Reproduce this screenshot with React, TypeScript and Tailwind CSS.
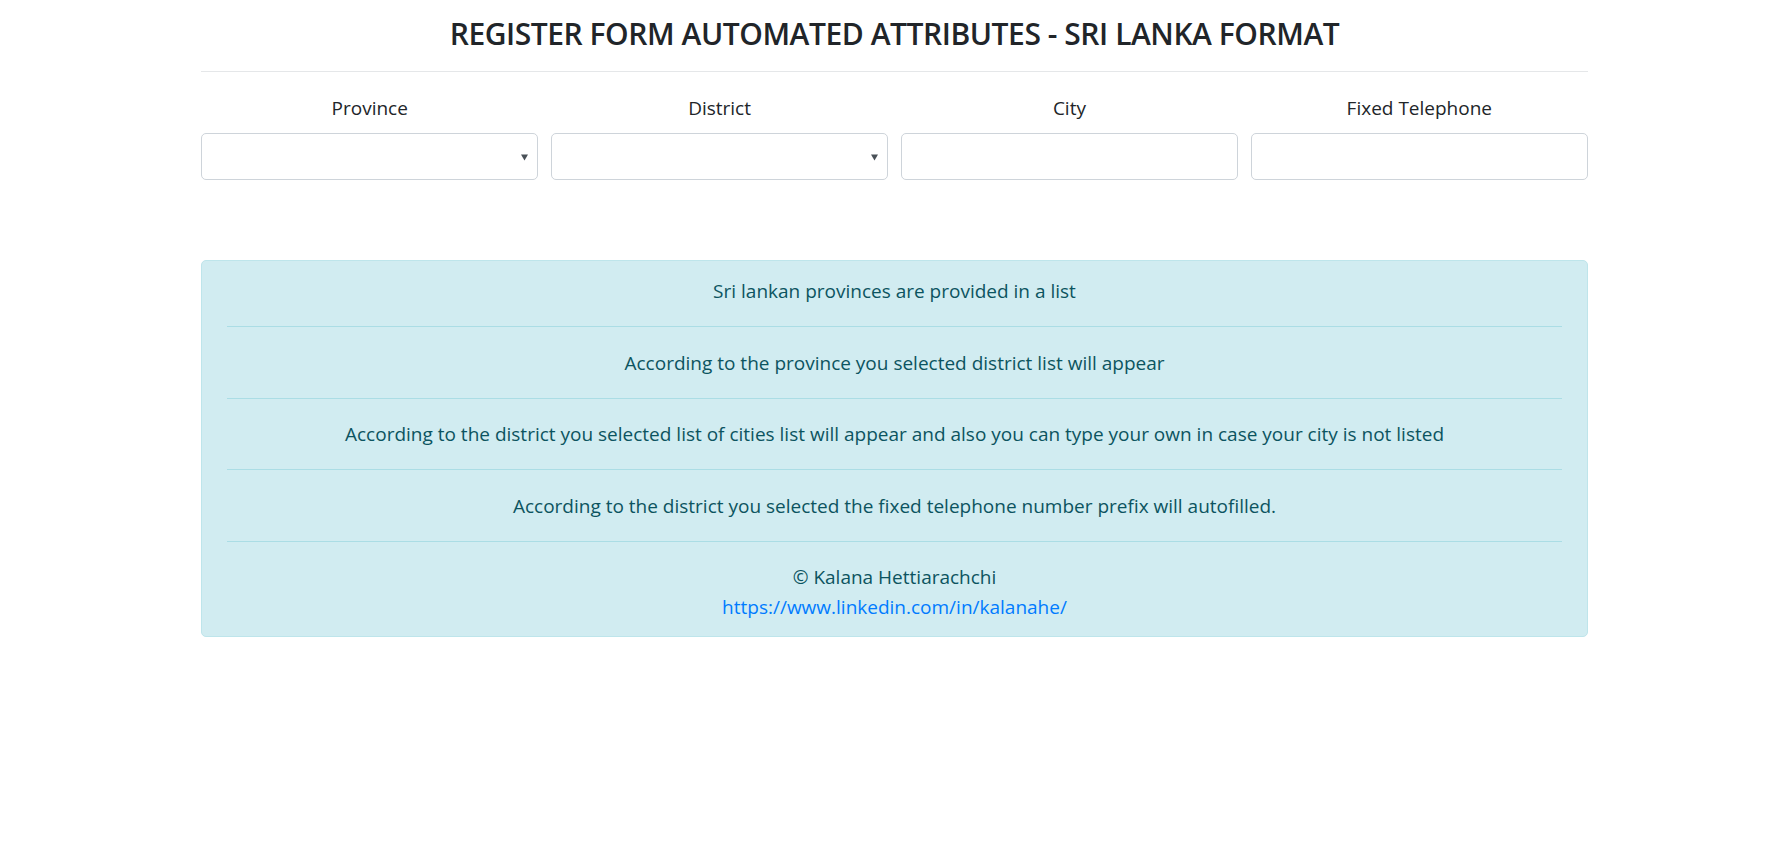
import React, { useState } from 'react';

const FONT = "font-['Open_Sans','Noto_Sans',sans-serif]";

const SelectBox: React.FC = () => (
  <div className="relative h-[47px] rounded-[5px] border border-[#ced4da] bg-white">
    {/* native-looking dropdown arrow */}
    <svg
      className="absolute right-[9px] top-[20px]"
      width="7"
      height="7"
      viewBox="0 0 7 7"
    >
      <path d="M0 0.5 H7 L3.5 6.5 Z" fill="#495057" />
    </svg>
  </div>
);

const TextBox: React.FC<{ value: string; onChange: (v: string) => void }> = ({
  value,
  onChange
}) => (
  <input
    type="text"
    value={value}
    onChange={e => onChange(e.target.value)}
    className="block h-[47px] w-full rounded-[5px] border border-[#ced4da] bg-white px-4 text-[19px] text-[#495057] outline-none"
  />
);

const notes = [
  'Sri lankan provinces are provided in a list',
  'According to the province you selected district list will appear',
  'According to the district you selected list of cities list will appear and also you can type your own in case your city is not listed',
  'According to the district you selected the fixed telephone number prefix will autofilled.'
];

export default function App() {
  const [city, setCity] = useState('');
  const [phone, setPhone] = useState('');

  return (
    <div className={`${FONT} min-h-screen bg-white text-[#212529]`}>
      <div className="ml-[201px] w-[1387px]">
        {/* Title */}
        <h3 className="pt-[15px] pb-[18px] text-center text-[30px] leading-[38px] font-semibold tracking-[-0.015em] text-[#212529]">
          REGISTER FORM AUTOMATED ATTRIBUTES - SRI LANKA FORMAT
        </h3>
        <hr className="border-0 border-t border-[#e5e7e9]" />

        {/* Form row */}
        <div className="mt-[21px] grid grid-cols-4 gap-x-[12.5px]">
          <div>
            <label className="mb-[10px] block text-center text-[19px] leading-[30px]">Province</label>
            <SelectBox />
          </div>
          <div>
            <label className="mb-[10px] block text-center text-[19px] leading-[30px]">District</label>
            <SelectBox />
          </div>
          <div>
            <label className="mb-[10px] block text-center text-[19px] leading-[30px]">City</label>
            <TextBox value={city} onChange={setCity} />
          </div>
          <div>
            <label className="mb-[10px] block text-center text-[19px] leading-[30px]">Fixed Telephone</label>
            <TextBox value={phone} onChange={setPhone} />
          </div>
        </div>

        {/* Info alert */}
        <div className="mt-[80px] rounded-[5px] border border-[#bee5eb] bg-[#d1ecf1] px-[25px] pt-[15px] pb-[14px] text-center text-[19px] leading-[30px] text-[#0c5460]">
          {notes.map(n => (
            <React.Fragment key={n}>
              <div>{n}</div>
              <hr className="my-[20.25px] border-0 border-t border-[#abdde5]" />
            </React.Fragment>
          ))}
          <div>© Kalana Hettiarachchi</div>
          <a href="#" className="block text-[#007bff]">
            https://www.linkedin.com/in/kalanahe/
          </a>
        </div>
      </div>
    </div>
  );
}
